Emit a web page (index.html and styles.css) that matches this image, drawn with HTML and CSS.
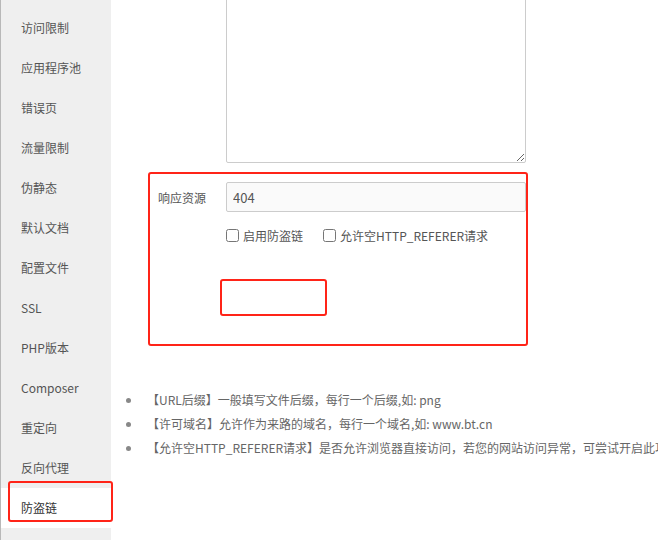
FILE: index.html
```html
<!DOCTYPE html>
<html lang="zh-CN">
<head>
    <meta charset="UTF-8">
    <meta name="viewport" content="width=device-width, initial-scale=1.0">
    <title>防盗链</title>
    <link rel="stylesheet" href="styles.css">
</head>
<body>
    <section class="Site-Panel">
        <ul class="Side-Menu">
            <li>访问限制</li>
            <li>应用程序池</li>
            <li>错误页</li>
            <li>流量限制</li>
            <li>伪静态</li>
            <li>默认文档</li>
            <li>配置文件</li>
            <li>SSL</li>
            <li>PHP版本</li>
            <li>Composer</li>
            <li>重定向</li>
            <li>反向代理</li>
            <li class="Active">防盗链</li>
        </ul>
        <div class="Content-Wrapper">
            <textarea class="Domain-Box"></textarea>
            <div class="Mark-Box">
                <div class="Form-Row">
                    <label for="Return-Rule">响应资源</label>
                    <input type="text" id="Return-Rule" value="404">
                </div>
                <div class="Check-Row">
                    <label><input type="checkbox"> 启用防盗链</label>
                    <label><input type="checkbox"> 允许空HTTP_REFERER请求</label>
                </div>
                <div class="Save-Mark"></div>
            </div>
            <ul class="Help-List">
                <li>【URL后缀】一般填写文件后缀，每行一个后缀,如: png</li>
                <li>【许可域名】允许作为来路的域名，每行一个域名,如: www.bt.cn</li>
                <li>【允许空HTTP_REFERER请求】是否允许浏览器直接访问，若您的网站访问异常，可尝试开启此功</li>
            </ul>
        </div>
    </section>
</body>
</html>
```

FILE: styles.css
```css
*, *::before, *::after{
    box-sizing: border-box;
    padding: 0;
    margin: 0;
    font-family: "Noto Sans CJK SC", "Liberation Sans", sans-serif;
}
body{
    width: 658px;
    height: 540px;
    overflow: hidden;
    background-color: #fff;
}
section.Site-Panel{
    display: flex;
    height: 540px;
}
.Side-Menu{
    width: 111px;
    flex-shrink: 0;
    list-style: none;
    background-color: #efefef;
    border-left: 1px solid #b8b8b8;
    padding-top: 8px;
}
.Side-Menu li{
    height: 40px;
    line-height: 40px;
    padding-left: 20px;
    font-size: 12px;
    color: #555;
}
.Side-Menu li.Active{
    position: relative;
    background-color: #fff;
    color: #333;
}
.Side-Menu li.Active::after{
    content: "";
    position: absolute;
    left: 7px;
    top: -7px;
    width: 105px;
    height: 41px;
    border: 2px solid #ff2418;
    border-radius: 3px;
}
.Content-Wrapper{
    flex: 1;
    overflow: hidden;
}
.Domain-Box{
    display: block;
    width: 300px;
    height: 183px;
    margin: -20px 0 0 115px;
    border: 1px solid #ccc;
    border-radius: 2px;
    resize: vertical;
}
.Mark-Box{
    width: 380px;
    height: 174px;
    margin: 9px 0 0 37px;
    border: 2px solid #ff2418;
    border-radius: 3px;
    padding-top: 8px;
}
.Form-Row{
    display: flex;
    align-items: center;
}
.Form-Row label{
    width: 76px;
    padding-left: 8px;
    font-size: 12px;
    color: #555;
}
.Form-Row input{
    width: 300px;
    height: 30px;
    padding: 0 6px;
    border: 1px solid #ccc;
    border-radius: 2px;
    background-color: #fafafa;
    font-size: 13px;
    color: #555;
}
.Check-Row{
    display: flex;
    gap: 20px;
    margin: 10px 0 0 76px;
    height: 26px;
    align-items: center;
}
.Check-Row label{
    display: flex;
    align-items: center;
    gap: 4px;
    font-size: 12px;
    color: #555;
}
.Check-Row input{
    width: 13px;
    height: 13px;
    margin: 0;
}
.Save-Mark{
    width: 107px;
    height: 37px;
    margin: 31px 0 0 70px;
    border: 2px solid #ff2418;
    border-radius: 3px;
}
.Help-List{
    margin: 42px 0 0 36px;
    list-style: none;
}
.Help-List li{
    position: relative;
    height: 24px;
    line-height: 24px;
    font-size: 12px;
    color: #666;
    white-space: nowrap;
}
.Help-List li::before{
    content: "";
    position: absolute;
    left: -21px;
    top: 10px;
    width: 5px;
    height: 5px;
    border-radius: 50%;
    background-color: #888;
}
```
